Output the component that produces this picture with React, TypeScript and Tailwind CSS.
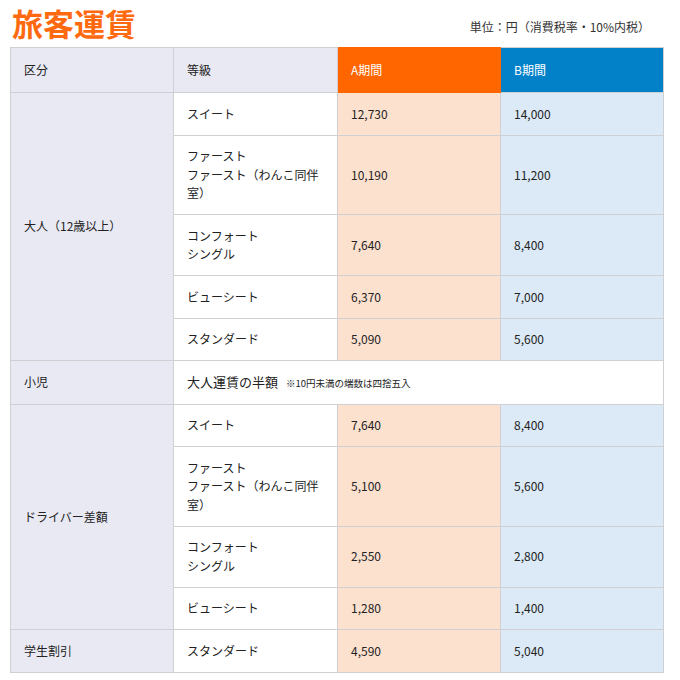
const font = { fontFamily: '"Noto Sans CJK JP", "Noto Sans", sans-serif' };

type Row = { grade: string[]; a: string; b: string };

const adult: Row[] = [
  { grade: ["スイート"], a: "12,730", b: "14,000" },
  { grade: ["ファースト", "ファースト（わんこ同伴室）"], a: "10,190", b: "11,200" },
  { grade: ["コンフォート", "シングル"], a: "7,640", b: "8,400" },
  { grade: ["ビューシート"], a: "6,370", b: "7,000" },
  { grade: ["スタンダード"], a: "5,090", b: "5,600" },
];

const driver: Row[] = [
  { grade: ["スイート"], a: "7,640", b: "8,400" },
  { grade: ["ファースト", "ファースト（わんこ同伴室）"], a: "5,100", b: "5,600" },
  { grade: ["コンフォート", "シングル"], a: "2,550", b: "2,800" },
  { grade: ["ビューシート"], a: "1,280", b: "1,400" },
];

const cell = "border border-[#cfcfd4] px-[13px] py-[11.5px] align-middle";
const label = `${cell} bg-[#e9e9f3]`;

function Grade({ lines }: { lines: string[] }) {
  return (
    <>
      {lines.map((l) => (
        <div key={l}>{l}</div>
      ))}
    </>
  );
}

function Rows({ title, rows }: { title: string; rows: Row[] }) {
  return (
    <>
      {rows.map((r, i) => (
        <tr key={title + i}>
          {i === 0 && (
            <td rowSpan={rows.length} className={label}>
              {title}
            </td>
          )}
          <td className={`${cell} bg-white`}>
            <Grade lines={r.grade} />
          </td>
          <td className={`${cell} bg-[#fde1cf]`}>{r.a}</td>
          <td className={`${cell} bg-[#dbeaf6]`}>{r.b}</td>
        </tr>
      ))}
    </>
  );
}

export default function App() {
  return (
    <div className="w-[680px] h-[680px] bg-white px-[10px] text-[#222]" style={font}>
      <div className="flex items-end justify-between pt-[5px] pb-[6px] pr-[20px]">
        <h1 className="text-[31px] leading-[36px] font-bold text-[#ff6a10] pl-[2px]">旅客運賃</h1>
        <div className="text-[12px] leading-[16px] text-[#333] mb-[6px]">単位：円（消費税率・10%内税）</div>
      </div>
      <table className="w-[653px] table-fixed border-collapse text-[12px] leading-[18.5px]">
        <colgroup>
          <col className="w-[163px]" />
          <col className="w-[164px]" />
          <col className="w-[163px]" />
          <col className="w-[163px]" />
        </colgroup>
        <thead>
          <tr className="h-[45px]">
            <th className={`${label} text-left font-normal`}>区分</th>
            <th className={`${label} text-left font-normal`}>等級</th>
            <th className={`${cell} bg-[#ff6600] border-[#ff6600] text-white text-left font-normal`}>A期間</th>
            <th className={`${cell} bg-[#0281c9] border-[#0281c9] text-white text-left font-normal`}>B期間</th>
          </tr>
        </thead>
        <tbody>
          <Rows title="大人（12歳以上）" rows={adult} />
          <tr>
            <td className={label}>小児</td>
            <td colSpan={3} className={`${cell} bg-white`}>
              <span className="text-[13px]">大人運賃の半額</span>
              <span className="text-[9.5px] ml-[8px]">※10円未満の端数は四捨五入</span>
            </td>
          </tr>
          <Rows title="ドライバー差額" rows={driver} />
          <tr>
            <td className={label}>学生割引</td>
            <td className={`${cell} bg-white`}>スタンダード</td>
            <td className={`${cell} bg-[#fde1cf]`}>4,590</td>
            <td className={`${cell} bg-[#dbeaf6]`}>5,040</td>
          </tr>
        </tbody>
      </table>
    </div>
  );
}
